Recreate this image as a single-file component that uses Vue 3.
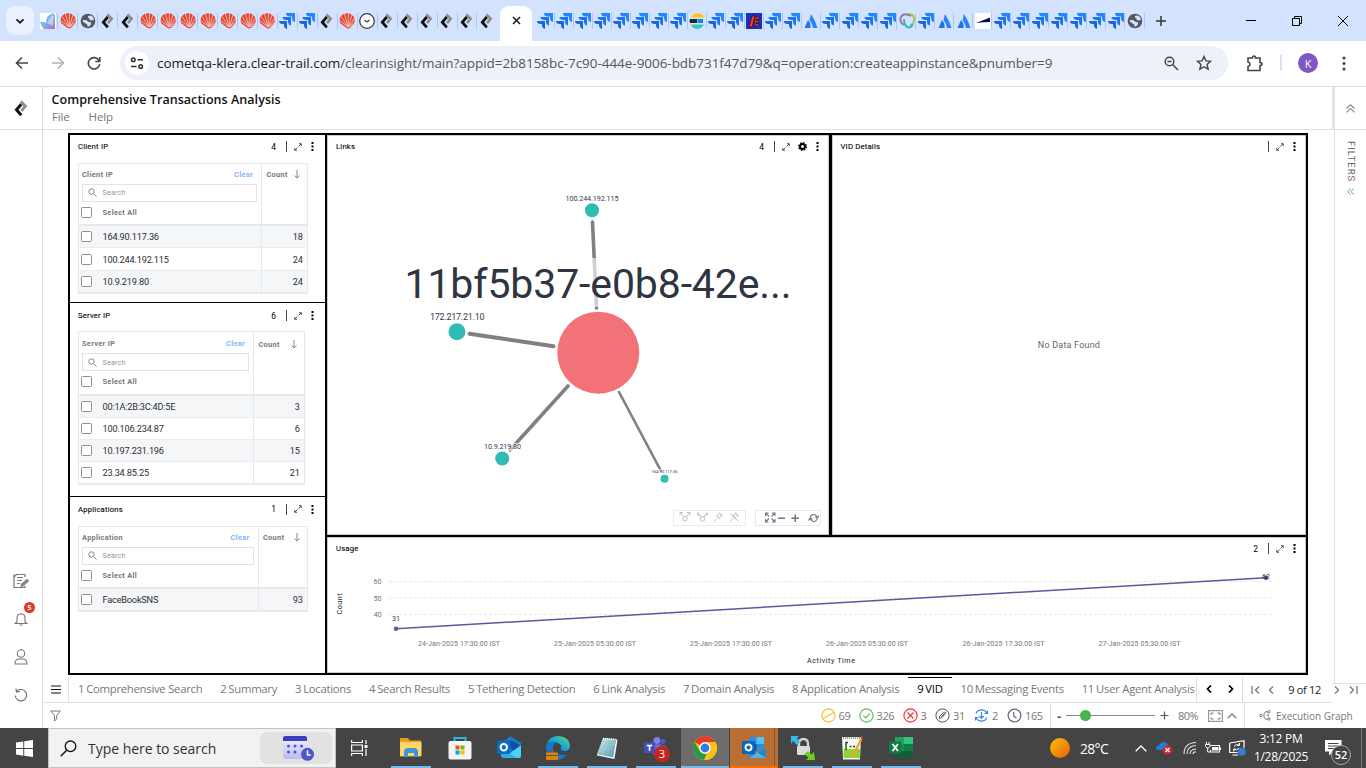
<script setup>
const leftTabs = ['bloom', 'shell', 'globe', 'klera', 'klera', ...Array(7).fill('shell'), 'jira', 'jira', 'klera', 'shell', 'clock', ...Array(6).fill('klera')]
const rightTabs = [...Array(8).fill('jira'), 'elastic', 'jira', 'jira', 'fred', 'jira', 'jira', 'atl', ...Array(4).fill('jira'), 'swirl', 'jira', 'atl', 'atl', 'flag', ...Array(7).fill('jira'), 'globe']

const tables = [
  { key: 'client', title: 'Client IP', total: 4, head: 'Client IP', rows: [['164.90.117.36', 18], ['100.244.192.115', 24], ['10.9.219.80', 24]] },
  { key: 'server', title: 'Server IP', total: 6, head: 'Server IP', rows: [['00:1A:2B:3C:4D:5E', 3], ['100.106.234.87', 6], ['10.197.231.196', 15], ['23.34.85.25', 21]] },
  { key: 'apps', title: 'Applications', total: 1, head: 'Application', rows: [['FaceBookSNS', 93]] }
]

const pages = ['Comprehensive Search', 'Summary', 'Locations', 'Search Results', 'Tethering Detection', 'Link Analysis', 'Domain Analysis', 'Application Analysis', 'VID', 'Messaging Events', 'User Agent Analysis']

const xLabels = [
  [418, '24-Jan-2025 17:30:00 IST'], [554, '25-Jan-2025 05:30:00 IST'], [690, '25-Jan-2025 17:30:00 IST'],
  [826, '26-Jan-2025 05:30:00 IST'], [962.5, '26-Jan-2025 17:30:00 IST'], [1098.5, '27-Jan-2025 05:30:00 IST']
]
const yLabels = [[60, 581.5], [50, 598], [40, 614.5]]

const nodes = [
  { x: 592, y: 210.3, r: 7, label: '100.244.192.115', lx: 565.5, ly: 201, w: 53, fs: 7.2 },
  { x: 457, y: 331.8, r: 8.5, label: '172.217.21.10', lx: 430, ly: 319.8, w: 54.5, fs: 9 },
  { x: 502.2, y: 458.5, r: 7, label: '10.9.219.80', lx: 484, ly: 449, w: 37, fs: 7.2 },
  { x: 664.6, y: 478.8, r: 4, label: '164.90.117.36', lx: 651.5, ly: 473, w: 26, fs: 4.2 }
]
const taskApps = [
  ['explorer', 'on'], ['store', ''], ['outlooknew', ''], ['edge', 'on'], ['notepad', 'on'], ['teams', 'on'],
  ['chrome', 'active'], ['outlook', 'alert'], ['lock', 'on'], ['npp', 'on'], ['excel', 'on']
]
</script>

<template>
  <svg class="defs" width="0" height="0">
    <defs>
      <linearGradient id="gBloom" x1="0" y1="0" x2="1" y2="1"><stop offset="0" stop-color="#5fc6e8" /><stop offset=".5" stop-color="#7fb4e6" /><stop offset="1" stop-color="#b36ad0" /></linearGradient>
      <linearGradient id="gSun" x1="0" y1="0" x2="1" y2="1"><stop offset="0" stop-color="#ffc400" /><stop offset="1" stop-color="#ea5b0c" /></linearGradient>
      <linearGradient id="gEdge" x1="0" y1="1" x2="1" y2="0"><stop offset="0" stop-color="#0c59a4" /><stop offset=".5" stop-color="#1ba5de" /><stop offset="1" stop-color="#5fdc6a" /></linearGradient>
      <linearGradient id="gCal" x1="0" y1="0" x2="0" y2="1"><stop offset="0" stop-color="#f5f4ff" /><stop offset="1" stop-color="#b9bcf0" /></linearGradient>
      <linearGradient id="gNote" x1="0" y1="0" x2="1" y2="1"><stop offset="0" stop-color="#d6eef0" /><stop offset="1" stop-color="#4f9dab" /></linearGradient>
      <symbol id="t-bloom" viewBox="0 0 16 16"><path d="M0 0h16v16H0z" fill="#fff" /><path d="M0 9q4-1 6 1 0-5 2-7l5-3 2 2v14H4Q1 13 0 9z" fill="url(#gBloom)" /><path d="m7 10 5-8 2 1-1 10z" fill="#d8eef8" fill-opacity=".6" /></symbol>
      <symbol id="t-shell" viewBox="0 0 16 16"><path d="M1 10Q-.5 3 5 1q6-2.500 10 3 1 3 .5 6L11 15l-2 .5-2-1z" fill="#e5452c" /><path d="M9 14 .5 7.500M9 14 2 3.500M9 14 5.500 1M9 14 9.500 0M9.500 14 13 1.500M10 14l5.500-9M10 14l6-5" stroke="#f7d9db" stroke-width=".75" /></symbol>
      <symbol id="t-globe" viewBox="0 0 16 16"><circle cx="8" cy="8" r="7.300" fill="#555a60" /><path d="M2.500 7q4-.5 5 1t3 1q1.500 2-1 4l-2 1q.5-3-2-3.500T2.500 7zM8 3q3-1.500 5 1l1 3-3 .5Q9 7 9.500 5.500 7.500 5 8 3z" fill="#d5e2fb" /></symbol>
      <symbol id="t-klera" viewBox="0 0 16 16"><path d="m7.300 1.500 4.300 4.200-3.600 4.500" fill="none" stroke="#8f8f8f" stroke-width="2.700" /><path d="M7.800 4 3.300 9.200l4.500 5.200" fill="none" stroke="#111" stroke-width="2.800" /></symbol>
      <symbol id="t-jira" viewBox="0 0 16 16"><path d="M7 0h9v9q-3-.5-3-4V3.500H11Q7 3.500 7 0z" fill="#2684ff" /><path d="M3.500 4h8.500v8.500q-3-.5-3-4V7H7.500Q3.500 7 3.500 4z" fill="#1c74ee" /><path d="M0 8h8v8q-3-.5-3-4v-1H3.500Q0 11 0 8z" fill="#1868dd" /></symbol>
      <symbol id="t-clock" viewBox="0 0 16 16"><circle cx="8" cy="8" r="7.300" fill="#fff" stroke="#3c4043" stroke-width="1.300" /><path d="m5.500 7 2.500 2 2.500-2" fill="none" stroke="#3c4043" stroke-width="1.300" /></symbol>
      <symbol id="t-elastic" viewBox="0 0 16 16"><path d="M2 4.500Q5-1 11 .5q3 1 4 4z" fill="#fec514" /><path d="M1 6h7v4H1q-1-2 0-4z" fill="#22252e" /><path d="M8.500 6H14v4H8.500z" fill="#0a8ae8" /><path d="M2 11.500h13Q12 16 8 16t-6-4.500z" fill="#3cc5b5" /></symbol>
      <symbol id="t-fred" viewBox="0 0 16 16"><path d="M0 0h16v16H0z" fill="#1e2fbe" /><path d="m3 14 3-11h3L6 14zM9 4h4.500v2H10v1.500h3v2h-3V11h3v2H8.500z" fill="#ff3b2b" stroke="#130b13" stroke-width=".6" /></symbol>
      <symbol id="t-atl" viewBox="0 0 16 16"><path d="M8 1q4 6 6.500 14H10Q9 10 6.500 7z" fill="#2684ff" /><path d="M5 7q3 3 2.500 8H1.500z" fill="#2173ea" /></symbol>
      <symbol id="t-swirl" viewBox="0 0 16 16"><path d="M9 1q6-.5 6 5 0 5-4 7" fill="none" stroke="#a3cf3e" stroke-width="2" /><path d="M12 3Q5-1 2 4q-2 5 3 8" fill="none" stroke="#9a74a9" stroke-width="1.900" /><path d="M5 6q0 8 5 8.500 3-.5 3.500-3.500" fill="none" stroke="#35b6cf" stroke-width="2" /></symbol>
      <symbol id="t-flag" viewBox="0 0 16 16"><path d="M0 0h16v16H0z" fill="#fff" /><path d="M1 10 15 4.500V9q-6 0-14 1z" fill="#0a0a58" /></symbol>

      <symbol id="k-explorer" viewBox="0 0 24 24"><path d="M1 3q0-1 1-1h7l2 2.500H22v16H1z" fill="#e6a216" /><path d="M1 6h21.500v13q0 1-1 1H1z" fill="#ffd667" /><path d="M5 21v-5q0-4 4-4h6q4 0 4 4v5h-4v-4H9v4z" fill="#3a97dc" /></symbol>
      <symbol id="k-store" viewBox="0 0 24 24"><path d="M6.500 7V2h11v5" fill="none" stroke="#29b6e8" stroke-width="2" /><rect x=".5" y="5" width="23" height="18.500" rx="2" fill="#f4f4f4" /><path d="M7.500 9.500h4v4h-4z" fill="#f25022" /><path d="M12.500 9.500h4v4h-4z" fill="#7fba00" /><path d="M7.500 14.500h4v4h-4z" fill="#00a4ef" /><path d="M12.500 14.500h4v4h-4z" fill="#ffb900" /></symbol>
      <symbol id="k-outlooknew" viewBox="0 0 24 24"><path d="M4 7 13.500.5 24 7v12q0 3-3 3H7q-3 0-3-3z" fill="#1a7fd4" /><path d="m10 9 4-5 9 5-6 6z" fill="#0f4fa0" /><path d="m7 21 17-11.500V20q0 2-2 2H8z" fill="#4fd0f5" /><path d="M4 13v6q0 3 3 3h14z" fill="#27b2ec" /><rect x="0" y="4.500" width="13.500" height="13.500" rx="1.500" fill="#0f6cbd" /><circle cx="6.800" cy="11.200" r="3.200" fill="none" stroke="#fff" stroke-width="2" /></symbol>
      <symbol id="k-edge" viewBox="0 0 24 24"><path d="M0 12Q1 0 13 0q10 1 11 9 0 6-6 6-4 0-3-3 1-3-3-5Q5 5 0 12z" fill="url(#gEdge)" /><path d="M0 11Q3 4 10 6q-5 4-2 9 4 6 13 3-4 6-11 6Q0 22 0 11z" fill="#1478c9" /><rect x="0" y="16.500" width="12" height="7.500" rx="1" fill="#d98316" /><path d="M0 19.500h12M4 16.500V15h4v1.500" fill="none" stroke="#8a4b08" stroke-width="1" /></symbol>
      <symbol id="k-notepad" viewBox="0 0 24 24"><path d="m8 2 13 1-3 18-16-3z" fill="url(#gNote)" /><path d="m2 18 16 3 3-18 1.500 1-3 19L2 19.500z" fill="#edf2f2" /><path d="m8 2.500 12.500.8" stroke="#fff" stroke-width="1.500" stroke-dasharray="1 1" /></symbol>
      <symbol id="k-teams" viewBox="0 0 26 24"><circle cx="14" cy="4" r="3.800" fill="#7b83eb" /><circle cx="20.500" cy="5" r="2.700" fill="#5059c9" /><path d="M9 8h10v10q-3 4-7 2-3-1-3-5z" fill="#6a6fd6" /><path d="M17 8.500h7v6q-2 4-5 2z" fill="#4e55bd" /><rect x="0" y="5.500" width="12" height="12" rx="1" fill="#464eb8" /><path d="M3 8.500h6v1.700H6.900V15H5.100v-4.800H3z" fill="#fff" /></symbol>
      <symbol id="k-chrome" viewBox="0 0 24 24"><circle cx="12" cy="12" r="12" fill="#fbc116" /><path d="M1.600 6A12 12 0 0 1 22.400 6H12a6 6 0 0 0-5.200 3z" fill="#e33b2e" /><path d="M1.600 6 6.800 15a6 6 0 0 0 6.700 2.800L11 24A12 12 0 0 1 1.600 6z" fill="#269a48" /><path d="M22.400 6H12l5.200 9L12 24A12 12 0 0 0 22.400 6z" fill="#fbc116" /><circle cx="12" cy="12" r="5.700" fill="#fff" /><circle cx="12" cy="12" r="4.400" fill="#3579e8" /></symbol>
      <symbol id="k-outlook" viewBox="0 0 24 24"><path d="M7 1h15v14H7z" fill="#2a8fdf" /><path d="M14.500 1H22v7h-7.500z" fill="#50c2f4" /><path d="M7 8h7.500v7H7z" fill="#0b5ba8" /><path d="M6 13 15 18l9-5.500V21q0 1-1 1H7z" fill="#2484d4" /><path d="m7 22 8-5.500L24 22z" fill="#50b4f0" /><rect x="0" y="5" width="13" height="13" rx="1" fill="#0a66b7" /><circle cx="6.500" cy="11.500" r="3" fill="none" stroke="#fff" stroke-width="1.900" /></symbol>
      <symbol id="k-lock" viewBox="0 0 24 24"><path d="M8 11V8q0-5 4.500-5T17 8v3" fill="none" stroke="#d0d3d6" stroke-width="2.300" /><path d="M0 0h8L6 2l3 4-3 3-4-4-2 3z" fill="#39b9e5" /><rect x="6" y="10" width="13" height="9" rx="1" fill="#d9dcdf" /><path d="M24 24h-9l2.500-2.500-4-3.500 3.500-3 3.500 3.500L23 16z" fill="#6bd01f" /></symbol>
      <symbol id="k-npp" viewBox="0 0 24 24"><path d="M2 1h19l-1 22.500H3z" fill="#f4f8ef" /><path d="M3.500 13H20v9H3.500z" fill="#8fd43b" /><path d="M3 2h17" stroke="#999" stroke-width="2" stroke-dasharray="1 1" /><path d="M6 6v8M6 6.500h2M9.500 10.500h2M13 10.500h2" stroke="#333" stroke-width="1.400" /><path d="m20.500 2-8 16-1 3.500 3-2 8-16.500z" fill="#f0a32c" /><path d="m20.500 2 2 1 .5-2-1.500-.7z" fill="#d33" /></symbol>
      <symbol id="k-excel" viewBox="0 0 24 24"><path d="M6 1h9v21H6z" fill="#1c8c4e" /><path d="M15 1h9v7h-9z" fill="#33c481" /><path d="M15 8h9v7h-9z" fill="#107c41" /><path d="M6 15h18v7H6z" fill="#185c37" /><path d="M6 1h9v7H6z" fill="#21a366" /><rect x="0" y="5.500" width="12.500" height="12" rx="1" fill="#107c41" /><path d="m3.500 8 5.500 7M9 8l-5.500 7" stroke="#fff" stroke-width="1.800" /></symbol>
    </defs>
  </svg>

  <div class="screen">
    <div class="tabstrip">
      <div class="tab-search"><svg width="10" height="10" viewBox="0 0 10 10"><path d="m1.500 3.300 3.500 3.400 3.500-3.400" fill="none" stroke="#1f1f1f" stroke-width="1.800" /></svg></div>
      <div class="tabs tabs-left">
        <span v-for="(t, i) in leftTabs" :key="i" class="tab"><svg width="16" height="16"><use :href="'#t-' + t" /></svg></span>
      </div>
      <div class="tab-active"><svg width="9" height="9" viewBox="0 0 9 9"><path d="m1 1 7 7M8 1 1 8" stroke="#1f1f1f" stroke-width="1.600" /></svg></div>
      <div class="tabs tabs-right">
        <span v-for="(t, i) in rightTabs" :key="i" class="tab"><svg width="16" height="16"><use :href="'#t-' + t" /></svg></span>
      </div>
      <svg class="new-tab" width="10" height="10" viewBox="0 0 10 10"><path d="M5 0v10M0 5h10" stroke="#333" stroke-width="1.500" /></svg>
      <div class="win-buttons">
        <svg width="10" height="10" viewBox="0 0 10 10"><path d="M0 4.500h10" stroke="#000" /></svg>
        <svg width="10" height="10" viewBox="0 0 10 10"><path d="M.5 2.500h7v7h-7zM2.500 2.500v-2h7v7h-2" fill="none" stroke="#000" /></svg>
        <svg width="10" height="10" viewBox="0 0 10 10"><path d="m0 0 10 10M10 0 0 10" stroke="#000" /></svg>
      </div>
    </div>

    <div class="toolbar">
      <svg class="nav-ic" width="14" height="14" viewBox="0 0 14 14"><path d="M13 7H2M7 1.500 1.500 7 7 12.500" fill="none" stroke="#444746" stroke-width="1.600" /></svg>
      <svg class="nav-ic" width="14" height="14" viewBox="0 0 14 14"><path d="M1 7h11M7 1.500 12.500 7 7 12.500" fill="none" stroke="#b3b4b5" stroke-width="1.600" /></svg>
      <svg class="nav-ic" width="14" height="14" viewBox="0 0 14 14"><path d="M12 4.500A5.700 5.700 0 1 0 12.700 8M12.800 1v4.500H8.300" fill="none" stroke="#444746" stroke-width="1.600" /></svg>
      <div class="address">
        <span class="site-info"><svg width="14" height="14" viewBox="0 0 14 14"><g fill="none" stroke="#333" stroke-width="1.500"><circle cx="3.300" cy="3.700" r="1.800" /><path d="M7.500 3.700H13M1 10.500h5.500" /><circle cx="10.700" cy="10.500" r="1.800" /></g></svg></span>
        <span class="url">cometqa-klera.clear-trail.com<i>/clearinsight/main?appid=2b8158bc-7c90-444e-9006-bdb731f47d79&amp;q=operation:createappinstance&amp;pnumber=9</i></span>
        <svg class="a-zoom" width="15" height="15" viewBox="0 0 15 15"><g fill="none" stroke="#444746" stroke-width="1.500"><circle cx="5.500" cy="5.500" r="4.300" /><path d="m8.800 8.800 5.200 5.200M3.500 5.500h4" /></g></svg>
        <svg class="a-star" width="16" height="16" viewBox="0 0 16 16"><path d="m8 1.500 1.900 4.400 4.800.4L11 9.500l1.200 4.700L8 11.700l-4.200 2.500L5 9.500 1.300 6.300l4.800-.4z" fill="none" stroke="#444746" stroke-width="1.400" /></svg>
      </div>
      <svg class="puzzle" width="17" height="17" viewBox="0 0 17 17"><path d="M2 3h4.500q0-2 1.500-2t1.500 2H14v4.500q2 0 2 1.500t-2 1.500V15.500H2v-4q2-.5 2-2.300T2 7z" fill="none" stroke="#444746" stroke-width="1.600" /></svg>
      <span class="tb-sep"></span>
      <span class="avatar">K</span>
      <svg class="dots" width="4" height="15" viewBox="0 0 4 15"><g fill="#444746"><circle cx="2" cy="2" r="1.600" /><circle cx="2" cy="7.500" r="1.600" /><circle cx="2" cy="13" r="1.600" /></g></svg>
    </div>

    <div class="app">
      <aside class="rail">
        <div class="logo"><svg width="17" height="17"><use href="#t-klera" /></svg></div>
        <div class="rail-icons">
          <svg width="16" height="16" viewBox="0 0 16 16"><g fill="none" stroke="#777" stroke-width="1.200"><path d="M12 4V1.500H3.500L1 4v10.500h11V13M1 4V1.500M4 4.500h6M4 7.500h5M4 10.500h3" /><path d="m8.500 11.500 5.500-5 1.300 1.300-5 5-2 .5z" fill="#999" /></g></svg>
          <div class="bell">
            <svg width="14" height="14" viewBox="0 0 14 14"><path d="M3 10V6q0-4 4-4t4 4v4l1.800 1.500H1.200zM5.500 13h3M7 1v1" fill="none" stroke="#777" stroke-width="1.100" /></svg>
            <span class="badge">5</span>
          </div>
          <svg width="14" height="16" viewBox="0 0 14 16"><g fill="none" stroke="#777" stroke-width="1.100"><circle cx="7" cy="4.500" r="3.700" /><path d="M1 15q0-5 4-5h4q4 0 4 5z" /></g></svg>
          <svg width="14" height="14" viewBox="0 0 14 14"><path d="M3 3a5.700 5.700 0 1 1-1.800 4.500M2 .5 2.500 4 6 3.500" fill="none" stroke="#777" stroke-width="1.200" /></svg>
        </div>
      </aside>

      <main class="main">
        <header class="app-head">
          <h1>Comprehensive Transactions Analysis</h1>
          <nav><span>File</span><span>Help</span></nav>
        </header>

        <section class="board">
          <div class="col-left">
            <article v-for="t in tables" :key="t.key" class="panel" :class="t.key">
              <div class="p-head">
                <b>{{ t.title }}</b><em>{{ t.total }}</em><i class="bar"></i>
                <svg class="exp" width="8" height="8" viewBox="0 0 8 8"><path d="M4.500 3.500 7 1M5 .7h2.300V3M3.500 4.500 1 7M.7 5v2.300H3" fill="none" stroke="#444" stroke-width=".9" /></svg>
                <svg class="kebab" width="3" height="9" viewBox="0 0 3 9"><path d="M.5 0h2v2h-2zM.5 3.500h2v2h-2zM.5 7h2v2h-2z" /></svg>
              </div>
              <div class="grid">
                <div class="g-head">
                  <div class="g-main">
                    <div class="g-title"><span>{{ t.head }}</span><a>Clear</a></div>
                    <div class="g-search"><svg width="9" height="9" viewBox="0 0 9 9"><circle cx="3.500" cy="3.500" r="2.700" fill="none" stroke="#888" /><path d="m5.500 5.500 3 3" stroke="#888" /></svg>Search</div>
                    <div class="g-all"><i class="box"></i>Select All</div>
                  </div>
                  <div class="g-count"><span>Count</span><svg width="6" height="9" viewBox="0 0 6 9"><path d="M3 0v8M.5 5.500 3 8l2.500-2.500" fill="none" stroke="#888" /></svg></div>
                </div>
                <div v-for="r in t.rows" :key="r[0]" class="g-row">
                  <div class="g-main"><i class="box"></i>{{ r[0] }}</div>
                  <div class="g-val">{{ r[1] }}</div>
                </div>
              </div>
            </article>
          </div>

          <div class="col-right">
            <div class="row-top">
              <article class="panel links">
                <div class="p-head">
                  <b>Links</b><em>4</em><i class="bar"></i>
                  <svg class="exp" width="8" height="8" viewBox="0 0 8 8"><path d="M4.500 3.500 7 1M5 .7h2.300V3M3.500 4.500 1 7M.7 5v2.300H3" fill="none" stroke="#444" stroke-width=".9" /></svg>
                  <svg class="gear" width="9" height="9" viewBox="0 0 9 9"><circle cx="4.500" cy="4.500" r="2.500" fill="none" stroke="#000" stroke-width="2" /><circle cx="4.500" cy="4.500" r="3.900" fill="none" stroke="#000" stroke-width="1.200" stroke-dasharray="1.600 1.460" /></svg>
                  <svg class="kebab" width="3" height="9" viewBox="0 0 3 9"><path d="M.5 0h2v2h-2zM.5 3.500h2v2h-2zM.5 7h2v2h-2z" /></svg>
                </div>
                <svg class="graph" width="502" height="376" viewBox="327 158 502 376">
                  <g stroke="#808080" stroke-linecap="round">
                    <path d="m592.500 222 4 86" stroke-width="3.600" />
                    <path d="m469.500 333.700 84 12.500" stroke-width="4" />
                    <path d="m568 386-58 64" stroke-width="3.600" />
                    <path d="m619 392 42 79" stroke-width="2.600" />
                  </g>
                  <g fill="#fff" fill-opacity=".62">
                    <path d="M405 258h386v49H405zM483 443h39v8h-39zM651 469h27v5h-27z" />
                  </g>
                  <circle cx="598.300" cy="352.700" r="41" fill="#f37277" />
                  <text x="404.500" y="298" font-size="41" textLength="387" fill="#2e3440">11bf5b37-e0b8-42e...</text>
                  <g v-for="n in nodes" :key="n.label">
                    <circle :cx="n.x" :cy="n.y" :r="n.r" fill="#2fbdb3" />
                    <text :x="n.lx" :y="n.ly" :font-size="n.fs" :textLength="n.w" fill="#333a50">{{ n.label }}</text>
                  </g>
                  <g fill="none" stroke="#e8eaee">
                    <path d="M673.500 510.500h72v15h-72zM755.500 510.500h65v15h-65z" />
                  </g>
                  <g fill="none" stroke="#b4b8c0" stroke-width=".9">
                    <circle cx="685" cy="518.500" r="2.300" /><path d="m683.500 516.500-3-3.500M686.500 516.500l3-3.500M680 515.500v-3h3M690 515.500v-3h-3" />
                    <circle cx="702.500" cy="519" r="2.300" /><path d="M701 517q-.5-3.500-3.500-3M704 517q.5-3.500 3.500-3M699.500 512l-2.500 2 2.500 2M705.500 512l2.500 2-2.500 2" />
                    <path d="m714 521.500 3-3M716 515.500l4 4M717 516.500l2.500-3.500 2.500 2.500-3.500 2.500M719 512.500l3.500 3.500" />
                    <path d="m730 521.500 3-3M732 515.500l4 4M733 516.500l2.500-3.500 2.500 2.500-3.500 2.500M735 512.500l3.500 3.500M730.500 513l8 8.500" />
                  </g>
                  <g fill="none" stroke="#6d7686" stroke-width="1.100">
                    <path d="m766 513.500 3 3M774.500 513.500l-3 3M766 521.500l3-3M774.500 521.500l-3-3M765.500 516v-3h3M772 513h3v3M765.500 519v3h3M772 522h3v-3" />
                    <path d="M778 518.200h7M791.500 518.200h7.500M795.200 514.500v7.500" stroke-width="1.500" />
                    <path d="M810 518.500q.5-4 4-4 2 0 3.500 3M817.500 517.500q-.5 4-4 4-2 0-3.500-3M819 515.500l-1.500 2.300-2.500-.8M808.500 520.500l1.500-2.300 2.500.8" />
                  </g>
                </svg>
              </article>
              <article class="panel details">
                <div class="p-head">
                  <b>VID Details</b><i class="bar"></i>
                  <svg class="exp" width="8" height="8" viewBox="0 0 8 8"><path d="M4.500 3.500 7 1M5 .7h2.300V3M3.500 4.500 1 7M.7 5v2.300H3" fill="none" stroke="#444" stroke-width=".9" /></svg>
                  <svg class="kebab" width="3" height="9" viewBox="0 0 3 9"><path d="M.5 0h2v2h-2zM.5 3.500h2v2h-2zM.5 7h2v2h-2z" /></svg>
                </div>
                <p class="empty">No Data Found</p>
              </article>
            </div>
            <article class="panel usage">
              <div class="p-head">
                <b>Usage</b><em>2</em><i class="bar"></i>
                <svg class="exp" width="8" height="8" viewBox="0 0 8 8"><path d="M4.500 3.500 7 1M5 .7h2.300V3M3.500 4.500 1 7M.7 5v2.300H3" fill="none" stroke="#444" stroke-width=".9" /></svg>
                <svg class="kebab" width="3" height="9" viewBox="0 0 3 9"><path d="M.5 0h2v2h-2zM.5 3.500h2v2h-2zM.5 7h2v2h-2z" /></svg>
              </div>
              <svg class="graph" width="979" height="113" viewBox="327 560 979 113">
                <g v-for="y in yLabels" :key="y[0]">
                  <path :d="`M389 ${y[1]}H1273`" stroke="#e9e9e9" stroke-dasharray="3 2" />
                  <text x="373.500" :y="y[1] + 2.500" font-size="7.200" textLength="8" fill="#757575">{{ y[0] }}</text>
                </g>
                <path d="M396 628.800 1266 577.800" stroke="#555a9f" stroke-width="1.500" />
                <circle cx="396" cy="628.800" r="2.200" fill="#555a9f" /><circle cx="1266" cy="577.800" r="2.200" fill="#3f4372" />
                <text x="392" y="621" font-size="7.200" textLength="8" fill="#444">31</text>
                <text x="1262" y="579" font-size="7.200" textLength="8" fill="#444">62</text>
                <text v-for="x in xLabels" :key="x[0]" :x="x[0]" y="646.300" font-size="7" textLength="82" fill="#757575">{{ x[1] }}</text>
                <text x="807" y="663" font-size="7.200" textLength="48" fill="#222">Activity Time</text>
                <text transform="translate(342 614.500) rotate(-90)" font-size="7.200" textLength="21" fill="#222">Count</text>
              </svg>
            </article>
          </div>
        </section>

        <div class="pages">
          <div class="burger"><svg width="10" height="9" viewBox="0 0 10 9"><path d="M0 1h10M0 4.500h10M0 8h10" stroke="#111" stroke-width="1.200" /></svg></div>
          <div class="page-list">
            <span v-for="(p, i) in pages" :key="p" :class="{ current: i === 8 }">{{ i + 1 }}<u>{{ p }}</u></span>
          </div>
          <div class="scrollers">
            <svg width="6" height="8" viewBox="0 0 6 8"><path d="M5 .5 1.500 4 5 7.500" fill="none" stroke="#000" stroke-width="1.700" /></svg>
            <svg width="6" height="8" viewBox="0 0 6 8"><path d="M1 .5 4.500 4 1 7.500" fill="none" stroke="#000" stroke-width="1.700" /></svg>
          </div>
          <div class="pager">
            <svg width="9" height="8" viewBox="0 0 9 8"><path d="M1 0v8M8 .5 4.500 4 8 7.500" fill="none" stroke="#777" stroke-width="1.300" /></svg>
            <svg class="pg2" width="6" height="8" viewBox="0 0 6 8"><path d="M5 .5 1.500 4 5 7.500" fill="none" stroke="#777" stroke-width="1.300" /></svg>
            <span>9 of 12</span>
            <svg width="6" height="8" viewBox="0 0 6 8"><path d="M1 .5 4.500 4 1 7.500" fill="none" stroke="#777" stroke-width="1.300" /></svg>
            <svg class="pg4" width="9" height="8" viewBox="0 0 9 8"><path d="M8 0v8M1 .5 4.500 4 1 7.500" fill="none" stroke="#777" stroke-width="1.300" /></svg>
          </div>
        </div>

        <div class="status">
          <svg class="funnel" width="11" height="12" viewBox="0 0 11 12"><path d="M.7 1h9.600L6.700 5.500V9L4.500 11V5.500z" fill="none" stroke="#777" /></svg>
          <div class="counts">
            <div class="c1"><svg width="15" height="15" viewBox="0 0 15 15"><g fill="none" stroke="#fbc02d" stroke-width="1.200"><circle cx="7.500" cy="7.500" r="6.600" /><path d="m2 10.500 11-6" /></g></svg>69</div>
            <div class="c2"><svg width="15" height="15" viewBox="0 0 15 15"><g fill="none" stroke="#5cc060" stroke-width="1.200"><circle cx="7.500" cy="7.500" r="6.600" /><path d="m4.500 7.700 2.300 2.200 4-4.300" /></g></svg>326</div>
            <div class="c3"><svg width="15" height="15" viewBox="0 0 15 15"><g fill="none" stroke="#f23535" stroke-width="1.200"><circle cx="7.500" cy="7.500" r="6.600" /><path d="m4.500 4.500 6 6M10.500 4.500l-6 6" /></g></svg>3</div>
            <div class="c4"><svg width="15" height="15" viewBox="0 0 15 15"><g fill="none" stroke="#555" stroke-width="1"><circle cx="7.500" cy="7.500" r="6.600" /><path d="m4.300 10.700.4-2.500L8.700 4.300q1.800-.9 2 1L6.700 9.800zM6.200 8.800l3-3" /></g></svg>31</div>
            <div class="c5"><svg width="15" height="15" viewBox="0 0 15 15"><g fill="none" stroke="#3d87e4" stroke-width="1.200"><path d="M2 5.500a6 6 0 0 1 11 0M13 9.500a6 6 0 0 1-11 0M13.500 2.500v3h-3M1.500 12.500v-3h3M7.500 4v6M5.200 8l2.300 2.300L9.800 8" /></g></svg>2</div>
            <div class="c6"><svg width="15" height="15" viewBox="0 0 15 15"><g fill="none" stroke="#5e6672" stroke-width="1.200"><circle cx="7.500" cy="7.500" r="6.400" /><path d="M6.700 4v4l2.800 2.200" /></g></svg>165</div>
          </div>
          <div class="zoom">
            <b>-</b>
            <span class="track"><i></i></span>
            <svg width="9" height="9" viewBox="0 0 9 9"><path d="M4.500 .5v8M.5 4.500h8" stroke="#555" stroke-width="1.200" /></svg>
            <span class="pct">80%</span>
            <svg class="fit" width="15" height="12" viewBox="0 0 15 12"><rect x=".6" y=".6" width="13.800" height="10.800" fill="none" stroke="#999" stroke-width="1.200" /><path d="M3 5V3h2.500M9.500 3H12v2M12 7.500V9H9.500M5.500 9H3V7.500" fill="none" stroke="#777" /></svg>
            <svg width="10" height="6" viewBox="0 0 10 6"><path d="m.7 5.300 4.300-4.300 4.300 4.300" fill="none" stroke="#888" stroke-width="1.500" /></svg>
          </div>
          <div class="exec"><svg width="12" height="11" viewBox="0 0 12 11"><g fill="none" stroke="#777"><circle cx="2" cy="5.500" r="1.300" /><circle cx="9.800" cy="1.800" r="1.200" /><circle cx="9.800" cy="9" r="1.200" /><circle cx="9" cy="5.300" r=".7" /><path d="M8.500 1.800Q5 1 5 5.500T8.500 9" /></g></svg>Execution Graph</div>
        </div>
      </main>

      <aside class="filters">
        <div class="f-top"><svg width="9" height="9" viewBox="0 0 9 9"><path d="m.5 4.500 4-3.700 4 3.700M.5 8.300l4-3.700 4 3.700" fill="none" stroke="#888" stroke-width="1.100" /></svg></div>
        <div class="f-body">
          <span>FILTERS</span>
          <svg width="7" height="7" viewBox="0 0 7 7"><path d="M3.300.5.800 3.500l2.500 3M6.500.5 4 3.500l2.500 3" fill="none" stroke="#5b9bc8" stroke-width="1" /></svg>
        </div>
      </aside>
    </div>

    <footer class="taskbar">
      <div class="start"><svg width="17" height="17" viewBox="0 0 17 17"><path d="M0 2.500 7.300 1.400v6.700H0zM8.200 1.300 17 0v8.100H8.200zM0 9h7.300v6.700L0 14.600zM8.200 9H17v8l-8.800-1.300z" fill="#fff" /></svg></div>
      <div class="searchbox">
        <svg width="17" height="17" viewBox="0 0 17 17"><circle cx="10.500" cy="6.300" r="5.300" fill="none" stroke="#111" stroke-width="1.300" /><path d="M6.700 10.200.7 16.300" stroke="#111" stroke-width="1.400" /></svg>
        <span>Type here to search</span>
        <div class="highlight">
          <svg width="32" height="25" viewBox="0 0 32 25"><rect x="0" y="0" width="24" height="23" rx="2" fill="url(#gCal)" /><path d="M0 5V2q0-2 2-2h20q2 0 2 2v3z" fill="#3c40c0" /><g fill="#5055cc"><circle cx="5.500" cy="10" r="1.500" /><circle cx="12" cy="10" r="1.500" /><circle cx="18.500" cy="10" r="1.500" /><circle cx="5.500" cy="16" r="1.500" /><circle cx="12" cy="16" r="1.500" /></g><circle cx="24.500" cy="18.300" r="6.500" fill="#4f57cf" /><path d="M24.500 14.500v4.500h3.300" fill="none" stroke="#fff" stroke-width="1.500" /></svg>
        </div>
      </div>
      <div class="taskview"><svg width="17" height="16" viewBox="0 0 17 16"><path d="M.6 0v2.500h10.800V0M.6 16v-2.500h10.800V16M.6 5h10.800v6H.6zM15 0v4M15 9v7" fill="none" stroke="#fff" stroke-width="1.200" /><path d="M13.500 5h3v3h-3z" fill="#fff" /></svg></div>
      <div class="tasks">
        <div v-for="a in taskApps" :key="a[0]" class="task" :class="a[1]">
          <svg width="24" height="24"><use :href="'#k-' + a[0]" /></svg>
          <span v-if="a[0] === 'teams'" class="t-badge">3</span>
        </div>
      </div>
      <div class="tray">
        <svg width="20" height="20" viewBox="0 0 20 20"><circle cx="10" cy="10" r="10" fill="url(#gSun)" /></svg>
        <span class="temp">28°C</span>
        <svg class="chev" width="12" height="7" viewBox="0 0 12 7"><path d="M.7 6.300 6 1l5.300 5.300" fill="none" stroke="#fff" stroke-width="1.300" /></svg>
        <svg class="cloud" width="17" height="14" viewBox="0 0 17 14"><path d="M3 9Q0 9 .3 6.500.7 4 3.500 4 5 .5 8.500 1q3 .5 3.500 3.500 3 .5 2.500 4z" fill="#1683d8" /><circle cx="11.500" cy="9" r="4.700" fill="#d9202c" /><path d="m9.500 7 4 4M13.500 7l-4 4" stroke="#fff" stroke-width="1.300" /></svg>
        <svg class="wifi" width="14" height="14" viewBox="0 0 14 14"><g fill="none" stroke="#e5e5e5" stroke-width="1.100"><path d="M1 13Q1 2 13 1.500M4 13q0-8 9-8.500M7 13q0-4.500 6-5M10 13q0-2 3-2.200" /></g></svg>
        <svg class="batt" width="16" height="12" viewBox="0 0 16 12"><path d="M5.500 3.500h9v6.500h-9V8M15.500 5.500v2.500" fill="none" stroke="#fff" stroke-width="1.100" /><path d="M7 5h6.500v3.500H7z" fill="#fff" /><path d="M1.500 0v2.500M4 0v2.500M.5 2.500h4.500v2L3.500 6H2L.5 4.500zM2.700 6v4h2.500" fill="none" stroke="#fff" /></svg>
        <svg class="mon" width="17" height="16" viewBox="0 0 17 16"><path d="M.7 3 15 .7v7M.7 3v9.500h8M3.500 15H9" fill="none" stroke="#fff" stroke-width="1.200" /><path d="M5 6.500Q7 3.500 10 5M10.500 3v2.500H8M10 8q-2 3-5 1.500M4.700 11.500V9H7" fill="none" stroke="#fff" /><circle cx="12.700" cy="11.700" r="4" fill="#2c7fd1" /></svg>
        <div class="clock"><span>3:12 PM</span><span>1/28/2025</span></div>
        <div class="notes"><svg width="17" height="16" viewBox="0 0 17 16"><path d="M0 0h16.500v11.500H8L4 15.500V11.500H0z" fill="#fff" /><path d="M3 3.500h10.500M3 6h10.500M3 8.500h7" stroke="#444" stroke-width="1.100" /></svg><span>52</span></div>
        <i class="desk"></i>
      </div>
    </footer>
  </div>
</template>

<style>
html, body { margin: 0; overflow: hidden; background: #fff; }
</style>

<style scoped>
* { box-sizing: border-box; }
svg { display: block; flex: none; }
.defs { position: absolute; }
.screen { width: 1366px; height: 768px; display: flex; flex-direction: column; overflow: hidden; background: #fff; font-family: "Open Sans", "Noto Sans", sans-serif; color: #444; white-space: nowrap; }

.tabstrip { height: 41px; background: #d3e2fd; display: flex; align-items: center; }
.tab-search { width: 28px; height: 29px; margin-left: 6px; border-radius: 9px; background: #e9f0fe; display: flex; align-items: center; justify-content: center; }
.tabs { display: flex; }
.tabs-left { margin-left: 6px; width: 459px; }
.tab { flex: 1; display: flex; align-items: center; background: linear-gradient(#a8c7fa, #a8c7fa) right 1.5px center / 1px 16px no-repeat; }
.tabs-left .tab:last-child { background: none; }
.tab-active { width: 32px; height: 35px; margin-top: 6px; margin-left: 1px; background: #fff; border-radius: 9px 9px 0 0; display: flex; align-items: center; justify-content: center; padding-bottom: 7px; }
.tabs-right { margin-left: 5px; width: 609px; }
.new-tab { margin-left: 10px; }
.win-buttons { display: flex; gap: 36px; margin-left: 80px; }

.toolbar { height: 46px; display: flex; align-items: center; border-bottom: 1px solid #dcdcdc; background: #fff; padding-left: 15px; padding-bottom: 1px; }
.nav-ic { margin-right: 22px; }
.address { width: 1108px; height: 34px; margin-left: -3px; border-radius: 17px; background: #edf1fa; display: flex; align-items: center; padding-left: 5px; }
.site-info { width: 24px; height: 24px; border-radius: 12px; background: #fff; display: flex; align-items: center; justify-content: center; }
.url { font-size: 13.5px; margin-left: 8px; color: #202124; width: 1007px; letter-spacing: -0.04px; padding-bottom: 1px; }
.url i { font-style: normal; color: #55585c; }
.a-star { margin-left: 17px; }
.puzzle { margin-left: 18px; }
.tb-sep { width: 2px; height: 16px; background: #d3e2fd; margin-left: 17px; }
.avatar { width: 20px; height: 20px; border-radius: 10px; background: #7e57c2; color: #fff; font-size: 11px; margin-left: 16px; display: flex; align-items: center; justify-content: center; }
.dots { margin-left: 24px; }

.app { height: 641px; display: flex; }
.rail { width: 43px; border-right: 1px solid #dcdcdc; display: flex; flex-direction: column; justify-content: space-between; }
.logo { height: 43px; border-bottom: 1px solid #e0e0e0; display: flex; align-items: center; justify-content: center; }
.rail-icons { display: flex; flex-direction: column; align-items: center; gap: 23px; padding-bottom: 26px; }
.bell { position: relative; }
.badge { position: absolute; left: 10px; top: -10px; width: 11px; height: 11px; border-radius: 6px; background: #e5332d; color: #fff; font: bold 7px/11px "Open Sans", sans-serif; text-align: center; }

.main { width: 1289px; }
.app-head { height: 43px; border-bottom: 1px solid #e0e0e0; padding: 4px 0 0 8.5px; }
h1 { margin: 0; font-size: 12.500px; line-height: 18px; font-weight: 600; color: #111; letter-spacing: .05px; }
nav { display: flex; gap: 19px; font-size: 11.500px; line-height: 16px; color: #777; padding-left: .5px; letter-spacing: -0.15px; }

.board { width: 1240px; height: 542px; margin: 3px 0 0 25px; background: #000; padding: 2px; display: grid; grid-template-columns: 255px 979px; gap: 2px; font-family: Roboto, sans-serif; }
.col-left { display: grid; grid-template-rows: 167px 193px 176px; gap: 1px; }
.col-right { display: grid; grid-template-rows: 400px 136px; gap: 2px; }
.row-top { display: grid; grid-template-columns: 502px 474px; gap: 3px; }
.panel { background: #fff; overflow: hidden; }
.col-right .panel { box-shadow: inset 0 0 0 .5px #999; }
.p-head { display: flex; align-items: center; height: 23px; padding: 0 10px 0 8px; font-size: 7.7px; color: #000; }
.links .p-head, .usage .p-head { padding-left: 9px; }
.details .p-head { padding-left: 8.500px; }
.p-head b { font-weight: 400; margin-right: auto; letter-spacing: .2px; -webkit-text-stroke: .1px #000; }
.p-head em { font-style: normal; font-size: 8.500px; }
.bar { width: 1px; height: 11px; background: #444; margin-left: 10px; }
.exp { margin-left: 7px; }
.gear { margin-left: 8px; }
.kebab { margin-left: 9px; }
.col-left .p-head { padding-right: 11px; }

.grid { margin-left: 8px; border: 1px solid #e6e8ef; width: 230px; --count: 46px; }
.client .p-head { height: 23px; }
.client .grid { margin-top: 5px; }
.server .p-head { height: 25px; }
.server .grid { margin-top: 3px; width: 227px; --count: 51px; }
.server .g-head { height: 63.500px; }
.server .g-title { height: 21px; line-height: 24px; }
.server .g-count { padding-top: 8px; }
.server .g-all { height: 20px; }
.server .g-row { height: 22.200px; }
.apps .p-head { height: 24px; }
.apps .grid { margin-top: 5px; --count: 49.500px; }
.g-head, .g-row { display: flex; }
.g-head { height: 62px; border-bottom: 2px solid #e6e8ef; color: #777; font-size: 7.300px; font-weight: 700; letter-spacing: .35px; }
.g-main { flex: 1; }
.g-title { display: flex; justify-content: space-between; padding: 0 8px 0 3px; height: 19.500px; line-height: 21px; }
.g-title a { color: #86b6f2; }
.g-search { margin: 0 4px 0 3px; height: 18px; border: 1px solid #e2e2e2; display: flex; align-items: center; padding-left: 5px; gap: 5.500px; font-weight: 400; color: #999; letter-spacing: .1px; }
.g-all { display: flex; align-items: center; height: 22px; padding-left: 2px; }
.box { width: 11px; height: 11px; border: 1px solid #909090; border-radius: 1.500px; margin-right: 10.500px; background: #fff; }
.g-count { width: var(--count); border-left: 1.500px solid #e6e8ef; display: flex; justify-content: space-between; padding: 6px 7px 0 4.500px; }
.g-row { height: 22.400px; border-bottom: 1px solid #e9ebf1; font-size: 9.200px; color: #2b2e35; }
.g-row:nth-child(even) { background: #f4f6f8; }
.g-row .g-main { display: flex; align-items: center; padding-left: 2px; letter-spacing: -0.2px; }
.g-val { width: var(--count); border-left: 1.500px solid #e6e8ef; display: flex; align-items: center; justify-content: flex-end; padding-right: 4px; }

.graph { font-family: Roboto, sans-serif; }
.empty { margin: 182px 0 0; text-align: center; font-size: 9px; color: #666; letter-spacing: .2px; }

.pages { height: 28px; display: flex; border-bottom: 1px solid #e0e0e0; padding-top: 2px; }
.burger { width: 26px; border-right: 1px solid #e0e0e0; padding: 8px 0 0 8px; }
.page-list { width: 1129px; display: flex; gap: 17.800px; padding-left: 9px; font-size: 11.300px; line-height: 24px; color: #777; overflow: hidden; letter-spacing: -0.26px; }
.page-list u { text-decoration: none; margin-left: 2px; }
.page-list .current { color: #000; border-top: 1px solid #000; padding: 0 9px; margin: 0 -9px; line-height: 22px; }
.scrollers { width: 46px; border-left: 1px solid #e0e0e0; display: flex; align-items: center; justify-content: space-between; padding: 0 8px 2px 9px; }
.pager { border-left: 1px solid #e0e0e0; width: 123px; margin-right: -33px; display: flex; align-items: center; padding-left: 8px; font-size: 11px; color: #222; z-index: 1; }
.pg2 { margin-left: 8px; }
.pager span { width: 33px; margin: 0 13px 0 14px; letter-spacing: -0.3px; }
.pg4 { margin-left: 9px; }

.status { height: 25px; display: flex; align-items: center; width: 1323px; font-size: 11px; color: #777; position: relative; z-index: 1; background: #fff; }
.funnel { margin-left: 7px; }
.counts { display: flex; margin-left: 759.500px; width: 229.500px; }
.counts div { display: flex; align-items: center; gap: 3px; letter-spacing: -0.4px; }
.c1 { width: 38px; } .c2 { width: 44px; } .c3 { width: 32.500px; } .c4 { width: 39px; } .c5 { width: 33px; }
.zoom { border-left: 1px solid #e0e0e0; height: 25px; width: 194px; display: flex; align-items: center; padding-left: 6px; }
.zoom b { font-size: 13px; width: 9px; line-height: 20px; color: #555; }
.track { width: 89px; height: 1px; background: #888; position: relative; margin-right: 5px; }
.track i { position: absolute; left: 14px; top: -5px; width: 11px; height: 11px; border-radius: 6px; background: #45b649; }
.pct { margin-left: 9px; width: 21px; letter-spacing: -0.6px; }
.fit { margin: 0 4px 0 8.500px; }
.exec { border-left: 1px solid #e0e0e0; height: 25px; flex: 1; display: flex; align-items: center; gap: 5px; padding-left: 14px; font-size: 10px; letter-spacing: -0.05px; }

.filters { width: 34px; height: 597px; border-bottom: 1px solid #e0e0e0; }
.f-top { height: 43px; border-left: 3px solid #e2e2e2; border-bottom: 1px solid #e0e0e0; display: flex; align-items: center; justify-content: center; }
.f-body { height: 553px; border-left: 1px solid #e0e0e0; margin-left: 2px; display: flex; flex-direction: column; align-items: center; padding-top: 11px; gap: 6px; }
.f-body span { writing-mode: vertical-rl; font: 9.500px/12px Roboto, sans-serif; letter-spacing: 1px; color: #666; }

.taskbar { height: 40px; background: #444; display: flex; color: #fff; font-family: "Open Sans", "Noto Sans", sans-serif; }
.start { width: 48px; display: flex; align-items: center; justify-content: center; }
.searchbox { width: 288px; background: #f2f2f2; border: 1px solid #c3c3c3; display: flex; align-items: center; padding-left: 11px; color: #333; font-size: 14px; }
.searchbox span { margin-left: 11px; width: 172px; letter-spacing: -0.03px; }
.highlight { width: 72px; height: 32px; border-radius: 7px; background: #e2e2e2; display: flex; align-items: center; justify-content: center; padding-left: 6px; }
.taskview { width: 51px; display: flex; align-items: center; padding-left: 15px; }
.tasks { display: flex; gap: 1px; }
.task { width: 48px; position: relative; display: flex; align-items: center; justify-content: center; }
.on { background: linear-gradient(#76b9ed, #76b9ed) center bottom / 40px 2px no-repeat; }
.active { background: linear-gradient(#76b9ed, #76b9ed) center bottom / 48px 2px no-repeat #6c6c6c; }
.alert { background: linear-gradient(#ff6f00, #ff6f00) center bottom / 48px 2px no-repeat #b96e33; }
.alert::after { content: ""; position: absolute; right: 3px; top: 0; height: 38px; width: 1px; background: #8a5026; }
.t-badge { position: absolute; left: 22px; top: 18px; width: 16px; height: 16px; border-radius: 8px; background: #c4261d; font-size: 11px; line-height: 16px; text-align: center; }
.tray { flex: 1; display: flex; align-items: center; margin-left: 125px; font-size: 12px; }
.temp { font-size: 14px; margin-left: 10px; width: 30px; letter-spacing: -0.7px; }
.chev { margin-left: 25px; }
.cloud { margin-left: 9px; }
.wifi { margin-left: 10px; }
.batt { margin-left: 8px; }
.mon { margin-left: 8px; }
.clock { display: flex; flex-direction: column; align-items: center; width: 54px; margin-left: 8px; line-height: 18.500px; letter-spacing: -0.3px; }
.notes { position: relative; margin-left: 17px; }
.notes span { position: absolute; left: 6px; top: 5px; width: 20px; height: 20px; border-radius: 10px; background: #444; border: 1px solid #aaa; font-size: 11px; font-weight: 600; line-height: 18px; text-align: center; }
.desk { width: 1px; height: 40px; background: #777; margin-left: auto; margin-right: 4px; }
</style>
